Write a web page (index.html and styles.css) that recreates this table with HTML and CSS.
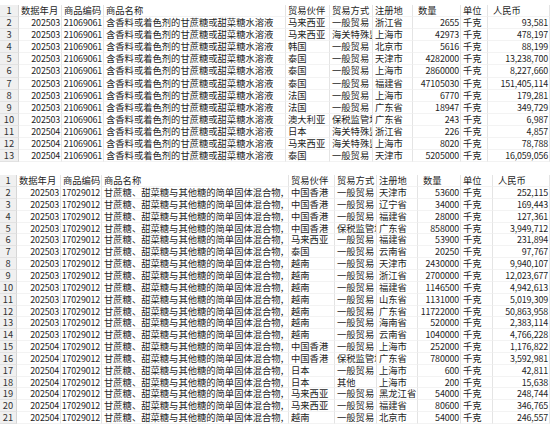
FILE: index.html
```html
<!DOCTYPE html>
<html lang="zh-CN">
<head>
<meta charset="utf-8">
<title>Sheet</title>
<link rel="stylesheet" href="styles.css">
</head>
<body>
<div class="page">
  <div class="sheet sheet-a">
    <span class="c rh">1</span><span class="c">数据年月</span><span class="c">商品编码</span><span class="c">商品名称</span><span class="c">贸易伙伴</span><span class="c">贸易方式</span><span class="c">注册地</span><span class="c hp">数量</span><span class="c">单位</span><span class="c hp">人民币</span>
    <span class="c rh">2</span><span class="c n">202503</span><span class="c n">21069061</span><span class="c">含香料或着色剂的甘蔗糖或甜菜糖水溶液</span><span class="c">马来西亚</span><span class="c">一般贸易</span><span class="c">浙江省</span><span class="c n">2655</span><span class="c">千克</span><span class="c n">93,581</span>
    <span class="c rh">3</span><span class="c n">202503</span><span class="c n">21069061</span><span class="c">含香料或着色剂的甘蔗糖或甜菜糖水溶液</span><span class="c">马来西亚</span><span class="c">海关特殊监管区域</span><span class="c">上海市</span><span class="c n">42973</span><span class="c">千克</span><span class="c n">478,197</span>
    <span class="c rh">4</span><span class="c n">202503</span><span class="c n">21069061</span><span class="c">含香料或着色剂的甘蔗糖或甜菜糖水溶液</span><span class="c">韩国</span><span class="c">一般贸易</span><span class="c">北京市</span><span class="c n">5616</span><span class="c">千克</span><span class="c n">88,199</span>
    <span class="c rh">5</span><span class="c n">202503</span><span class="c n">21069061</span><span class="c">含香料或着色剂的甘蔗糖或甜菜糖水溶液</span><span class="c">泰国</span><span class="c">一般贸易</span><span class="c">天津市</span><span class="c n">4282000</span><span class="c">千克</span><span class="c n">13,238,700</span>
    <span class="c rh">6</span><span class="c n">202503</span><span class="c n">21069061</span><span class="c">含香料或着色剂的甘蔗糖或甜菜糖水溶液</span><span class="c">泰国</span><span class="c">一般贸易</span><span class="c">上海市</span><span class="c n">2860000</span><span class="c">千克</span><span class="c n">8,227,660</span>
    <span class="c rh">7</span><span class="c n">202503</span><span class="c n">21069061</span><span class="c">含香料或着色剂的甘蔗糖或甜菜糖水溶液</span><span class="c">泰国</span><span class="c">一般贸易</span><span class="c">福建省</span><span class="c n">47105030</span><span class="c">千克</span><span class="c n">151,405,114</span>
    <span class="c rh">8</span><span class="c n">202503</span><span class="c n">21069061</span><span class="c">含香料或着色剂的甘蔗糖或甜菜糖水溶液</span><span class="c">法国</span><span class="c">一般贸易</span><span class="c">上海市</span><span class="c n">6770</span><span class="c">千克</span><span class="c n">179,281</span>
    <span class="c rh">9</span><span class="c n">202503</span><span class="c n">21069061</span><span class="c">含香料或着色剂的甘蔗糖或甜菜糖水溶液</span><span class="c">法国</span><span class="c">一般贸易</span><span class="c">广东省</span><span class="c n">18947</span><span class="c">千克</span><span class="c n">349,729</span>
    <span class="c rh">10</span><span class="c n">202503</span><span class="c n">21069061</span><span class="c">含香料或着色剂的甘蔗糖或甜菜糖水溶液</span><span class="c">澳大利亚</span><span class="c">保税监管场所</span><span class="c">广东省</span><span class="c n">243</span><span class="c">千克</span><span class="c n">6,987</span>
    <span class="c rh">11</span><span class="c n">202504</span><span class="c n">21069061</span><span class="c">含香料或着色剂的甘蔗糖或甜菜糖水溶液</span><span class="c">日本</span><span class="c">海关特殊监管区域</span><span class="c">浙江省</span><span class="c n">226</span><span class="c">千克</span><span class="c n">4,857</span>
    <span class="c rh">12</span><span class="c n">202504</span><span class="c n">21069061</span><span class="c">含香料或着色剂的甘蔗糖或甜菜糖水溶液</span><span class="c">马来西亚</span><span class="c">海关特殊监管区域</span><span class="c">上海市</span><span class="c n">8020</span><span class="c">千克</span><span class="c n">78,788</span>
    <span class="c rh">13</span><span class="c n">202504</span><span class="c n">21069061</span><span class="c">含香料或着色剂的甘蔗糖或甜菜糖水溶液</span><span class="c">泰国</span><span class="c">一般贸易</span><span class="c">天津市</span><span class="c n">5205000</span><span class="c">千克</span><span class="c n">16,059,056</span>
  </div>

  <div class="sheet sheet-b">
    <span class="c rh">1</span><span class="c">数据年月</span><span class="c">商品编码</span><span class="c">商品名称</span><span class="c">贸易伙伴</span><span class="c">贸易方式</span><span class="c">注册地</span><span class="c hp">数量</span><span class="c">单位</span><span class="c hp">人民币</span>
    <span class="c rh">2</span><span class="c n">202503</span><span class="c n">17029012</span><span class="c">甘蔗糖、甜菜糖与其他糖的简单固体混合物,</span><span class="c">中国香港</span><span class="c">一般贸易</span><span class="c">天津市</span><span class="c n">53600</span><span class="c">千克</span><span class="c n">252,115</span>
    <span class="c rh">3</span><span class="c n">202503</span><span class="c n">17029012</span><span class="c">甘蔗糖、甜菜糖与其他糖的简单固体混合物,</span><span class="c">中国香港</span><span class="c">一般贸易</span><span class="c">辽宁省</span><span class="c n">34000</span><span class="c">千克</span><span class="c n">169,443</span>
    <span class="c rh">4</span><span class="c n">202503</span><span class="c n">17029012</span><span class="c">甘蔗糖、甜菜糖与其他糖的简单固体混合物,</span><span class="c">中国香港</span><span class="c">一般贸易</span><span class="c">福建省</span><span class="c n">28000</span><span class="c">千克</span><span class="c n">127,361</span>
    <span class="c rh">5</span><span class="c n">202503</span><span class="c n">17029012</span><span class="c">甘蔗糖、甜菜糖与其他糖的简单固体混合物,</span><span class="c">中国香港</span><span class="c">保税监管场所</span><span class="c">广东省</span><span class="c n">858000</span><span class="c">千克</span><span class="c n">3,949,712</span>
    <span class="c rh">6</span><span class="c n">202503</span><span class="c n">17029012</span><span class="c">甘蔗糖、甜菜糖与其他糖的简单固体混合物,</span><span class="c">马来西亚</span><span class="c">一般贸易</span><span class="c">福建省</span><span class="c n">53900</span><span class="c">千克</span><span class="c n">231,894</span>
    <span class="c rh">7</span><span class="c n">202503</span><span class="c n">17029012</span><span class="c">甘蔗糖、甜菜糖与其他糖的简单固体混合物,</span><span class="c">泰国</span><span class="c">一般贸易</span><span class="c">云南省</span><span class="c n">20250</span><span class="c">千克</span><span class="c n">97,767</span>
    <span class="c rh">8</span><span class="c n">202503</span><span class="c n">17029012</span><span class="c">甘蔗糖、甜菜糖与其他糖的简单固体混合物,</span><span class="c">越南</span><span class="c">一般贸易</span><span class="c">天津市</span><span class="c n">2430000</span><span class="c">千克</span><span class="c n">9,940,107</span>
    <span class="c rh">9</span><span class="c n">202503</span><span class="c n">17029012</span><span class="c">甘蔗糖、甜菜糖与其他糖的简单固体混合物,</span><span class="c">越南</span><span class="c">一般贸易</span><span class="c">浙江省</span><span class="c n">2700000</span><span class="c">千克</span><span class="c n">12,023,677</span>
    <span class="c rh">10</span><span class="c n">202503</span><span class="c n">17029012</span><span class="c">甘蔗糖、甜菜糖与其他糖的简单固体混合物,</span><span class="c">越南</span><span class="c">一般贸易</span><span class="c">福建省</span><span class="c n">1146500</span><span class="c">千克</span><span class="c n">4,942,613</span>
    <span class="c rh">11</span><span class="c n">202503</span><span class="c n">17029012</span><span class="c">甘蔗糖、甜菜糖与其他糖的简单固体混合物,</span><span class="c">越南</span><span class="c">一般贸易</span><span class="c">山东省</span><span class="c n">1131000</span><span class="c">千克</span><span class="c n">5,019,309</span>
    <span class="c rh">12</span><span class="c n">202503</span><span class="c n">17029012</span><span class="c">甘蔗糖、甜菜糖与其他糖的简单固体混合物,</span><span class="c">越南</span><span class="c">一般贸易</span><span class="c">广东省</span><span class="c n">11722000</span><span class="c">千克</span><span class="c n">50,863,958</span>
    <span class="c rh">13</span><span class="c n">202503</span><span class="c n">17029012</span><span class="c">甘蔗糖、甜菜糖与其他糖的简单固体混合物,</span><span class="c">越南</span><span class="c">一般贸易</span><span class="c">海南省</span><span class="c n">520000</span><span class="c">千克</span><span class="c n">2,383,114</span>
    <span class="c rh">14</span><span class="c n">202503</span><span class="c n">17029012</span><span class="c">甘蔗糖、甜菜糖与其他糖的简单固体混合物,</span><span class="c">越南</span><span class="c">一般贸易</span><span class="c">云南省</span><span class="c n">1040000</span><span class="c">千克</span><span class="c n">4,766,228</span>
    <span class="c rh">15</span><span class="c n">202504</span><span class="c n">17029012</span><span class="c">甘蔗糖、甜菜糖与其他糖的简单固体混合物,</span><span class="c">中国香港</span><span class="c">一般贸易</span><span class="c">上海市</span><span class="c n">252000</span><span class="c">千克</span><span class="c n">1,176,822</span>
    <span class="c rh">16</span><span class="c n">202504</span><span class="c n">17029012</span><span class="c">甘蔗糖、甜菜糖与其他糖的简单固体混合物,</span><span class="c">中国香港</span><span class="c">保税监管场所</span><span class="c">广东省</span><span class="c n">780000</span><span class="c">千克</span><span class="c n">3,592,981</span>
    <span class="c rh">17</span><span class="c n">202504</span><span class="c n">17029012</span><span class="c">甘蔗糖、甜菜糖与其他糖的简单固体混合物,</span><span class="c">日本</span><span class="c">一般贸易</span><span class="c">上海市</span><span class="c n">600</span><span class="c">千克</span><span class="c n">42,811</span>
    <span class="c rh">18</span><span class="c n">202504</span><span class="c n">17029012</span><span class="c">甘蔗糖、甜菜糖与其他糖的简单固体混合物,</span><span class="c">日本</span><span class="c">其他</span><span class="c">上海市</span><span class="c n">200</span><span class="c">千克</span><span class="c n">15,638</span>
    <span class="c rh">19</span><span class="c n">202504</span><span class="c n">17029012</span><span class="c">甘蔗糖、甜菜糖与其他糖的简单固体混合物,</span><span class="c">马来西亚</span><span class="c">一般贸易</span><span class="c">黑龙江省</span><span class="c n">54000</span><span class="c">千克</span><span class="c n">248,744</span>
    <span class="c rh">20</span><span class="c n">202504</span><span class="c n">17029012</span><span class="c">甘蔗糖、甜菜糖与其他糖的简单固体混合物,</span><span class="c">马来西亚</span><span class="c">一般贸易</span><span class="c">福建省</span><span class="c n">80600</span><span class="c">千克</span><span class="c n">346,765</span>
    <span class="c rh">21</span><span class="c n">202504</span><span class="c n">17029012</span><span class="c">甘蔗糖、甜菜糖与其他糖的简单固体混合物,</span><span class="c">越南</span><span class="c">一般贸易</span><span class="c">北京市</span><span class="c n">54000</span><span class="c">千克</span><span class="c n">246,557</span>
  </div>
</div>
</body>
</html>
```

FILE: styles.css
```css
* {
  box-sizing: border-box;
}

html,
body {
  margin: 0;
  padding: 0;
  background: #ffffff;
}

body {
  width: 550px;
  height: 425px;
  overflow: hidden;
  font-family: "Noto Sans CJK SC", "Noto Sans", sans-serif;
  font-size: 9.3px;
  color: #1e1e1e;
}

.page {
  padding-top: 5px;
}

.sheet {
  display: grid;
}

.sheet-a {
  grid-template-columns: 19px 43px 42px 182px 44px 43px 40px 48px 27px 62px;
  grid-auto-rows: 12.1px;
}

.sheet-b {
  margin-top: 13px;
  grid-template-columns: 17px 44px 41px 187px 46px 42px 41px 43px 32px 57px;
  grid-auto-rows: 11.85px;
}

.c {
  overflow-x: clip;
  overflow-y: visible;
  white-space: nowrap;
  line-height: 11px;
  padding: 0 2px;
  border-right: 1px solid #e4e4e4;
  border-bottom: 1px solid #f3f3f3;
}

.n {
  text-align: right;
  padding: 0 1px 0 0;
  font-size: 8.9px;
  letter-spacing: -0.15px;
}

.hp {
  padding-left: 5px;
}

.rh {
  padding: 0;
  text-align: center;
  letter-spacing: 0;
  background: #f0f0f0;
  color: #333333;
  border-right: 1px solid #d6d6d6;
  border-bottom: 1px solid #e2e2e2;
}
```
